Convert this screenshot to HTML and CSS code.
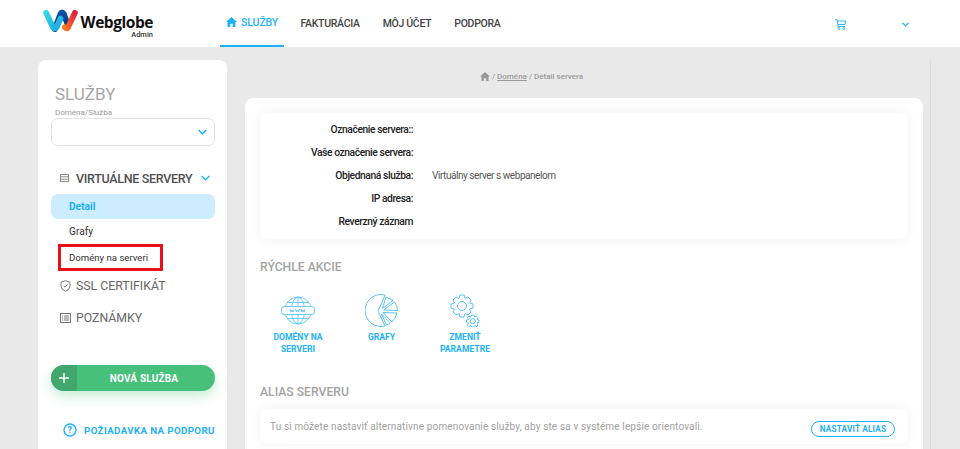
FILE: index.html
```html
<!DOCTYPE html>
<html lang="sk">
<head>
<meta charset="utf-8">
<title>Detail servera</title>
<link rel="stylesheet" href="styles.css">
</head>
<body>
<header class="topbar">
  <div class="logo">
    <svg class="logo-mark" width="35" height="23" viewBox="0 0 36 24">
      <defs>
        <linearGradient id="lg1" x1="0" y1="0" x2="1" y2="1"><stop offset="0" stop-color="#35d6e6"/><stop offset="1" stop-color="#1aa8e0"/></linearGradient>
        <linearGradient id="lg2" x1="0" y1="0" x2="0" y2="1"><stop offset="0" stop-color="#0a4fa8"/><stop offset="1" stop-color="#0f2f70"/></linearGradient>
        <linearGradient id="lg3" x1="1" y1="0" x2="0" y2="1"><stop offset="0" stop-color="#e3203a"/><stop offset="1" stop-color="#f7791f"/></linearGradient>
      </defs>
      <path d="M12 21 L18 5 Q19.500 2 21.500 5 L25 15" fill="none" stroke="url(#lg2)" stroke-width="6" stroke-linecap="round"/>
      <path d="M3 4 L10 19 Q12 22 14 19 L18 10" fill="none" stroke="url(#lg1)" stroke-width="6" stroke-linecap="round"/>
      <path d="M33 4 L26 19 Q24.500 21.500 22.500 19" fill="none" stroke="url(#lg3)" stroke-width="6" stroke-linecap="round"/>
    </svg>
    <div class="logo-text">
      <span class="logo-name">Webglobe</span>
      <span class="logo-sub">Admin</span>
    </div>
  </div>
  <nav class="nav">
    <a class="nav-item active">
      <svg width="11" height="10" viewBox="0 0 12 11"><path d="M6 0 L12 5.500 L10.300 5.500 L10.300 11 L7.400 11 L7.400 7.500 L4.600 7.500 L4.600 11 L1.700 11 L1.700 5.500 L0 5.500 Z" fill="#1eb1fb"/></svg>
      SLUŽBY
    </a>
    <a class="nav-item">FAKTURÁCIA</a>
    <a class="nav-item">MÔJ ÚČET</a>
    <a class="nav-item">PODPORA</a>
  </nav>
  <div class="top-actions">
    <svg width="11" height="11" viewBox="0 0 11 11" fill="none" stroke="#33b8fb" stroke-width="1"><path d="M0 .7 H2.200 L3 7.500 H10"/><path d="M2.400 2 H10.500 L10 5.500 H2.800"/><circle cx="3.800" cy="9.500" r="1"/><circle cx="8.800" cy="9.500" r="1"/></svg>
    <svg class="top-chevron" width="7" height="5" viewBox="0 0 7 5" fill="none" stroke="#33b8fb" stroke-width="1.300"><path d="M.5 .8 L3.500 3.800 L6.500 .8"/></svg>
  </div>
</header>

<div class="page">
  <aside class="sidebar">
    <h2 class="side-title">SLUŽBY</h2>
    <div class="field-label">Doména/Služba</div>
    <div class="select">
      <svg width="9" height="6" viewBox="0 0 9 6" fill="none" stroke="#1eb1fb" stroke-width="1.500"><path d="M.7 1 L4.500 4.700 L8.300 1"/></svg>
    </div>
    <div class="side-head">
      <svg width="9" height="8" viewBox="0 0 9 8" fill="none" stroke="#8a8a8a" stroke-width="1"><rect x=".5" y=".5" width="8" height="7"/><path d="M.5 2.800 H8.500 M.5 5.200 H8.500"/></svg>
      <span class="side-head-text">VIRTUÁLNE SERVERY</span>
      <svg width="9" height="6" viewBox="0 0 9 6" fill="none" stroke="#1eb1fb" stroke-width="1.500"><path d="M.7 1 L4.500 4.700 L8.300 1"/></svg>
    </div>
    <a class="sub-item current">Detail</a>
    <a class="sub-item">Grafy</a>
    <a class="sub-item marked">Domény na serveri</a>
    <div class="side-link">
      <svg width="11" height="12" viewBox="0 0 11 12" fill="none" stroke="#777" stroke-width="1"><path d="M5.500 .7 L10 2.300 V6 Q10 9.500 5.500 11.300 Q1 9.500 1 6 V2.300 Z"/><path d="M3.500 5.700 L5 7.200 L7.700 4.400"/></svg>
      SSL CERTIFIKÁT
    </div>
    <div class="side-link">
      <svg width="11" height="10" viewBox="0 0 11 10" fill="none" stroke="#777" stroke-width="1"><rect x=".5" y=".5" width="10" height="9"/><path d="M2 3 H3 M4 3 H9 M2 5 H3 M4 5 H9 M2 7 H3 M4 7 H9"/></svg>
      POZNÁMKY
    </div>
    <a class="new-service">
      <span class="new-plus">
        <svg width="10" height="10" viewBox="0 0 10 10" stroke="#fff" stroke-width="1.400"><path d="M5 0 V10 M0 5 H10"/></svg>
      </span>
      <span class="new-label">NOVÁ SLUŽBA</span>
    </a>
    <a class="support">
      <svg width="14" height="14" viewBox="0 0 14 14"><circle cx="7" cy="7" r="6" fill="none" stroke="#1eb1fb" stroke-width="1.400"/><text x="7" y="10.200" class="support-q">?</text></svg>
      POŽIADAVKA NA PODPORU
    </a>
  </aside>

  <main class="content">
    <div class="crumbs">
      <svg width="10" height="9" viewBox="0 0 12 11"><path d="M6 0 L12 5.500 L10.300 5.500 L10.300 11 L7.400 11 L7.400 7.500 L4.600 7.500 L4.600 11 L1.700 11 L1.700 5.500 L0 5.500 Z" fill="#9a9a9a"/></svg>
      <span>/ <u>Doména</u> / Detail servera</span>
    </div>
    <section class="panel">
      <div class="info">
        <div class="info-row"><b>Označenie servera::</b><span></span></div>
        <div class="info-row"><b>Vaše označenie servera:</b><span></span></div>
        <div class="info-row"><b>Objednaná služba:</b><span>Virtuálny server s webpanelom</span></div>
        <div class="info-row"><b>IP adresa:</b><span></span></div>
        <div class="info-row"><b>Reverzný záznam</b><span></span></div>
      </div>
      <h3 class="section-title">RÝCHLE AKCIE</h3>
      <div class="actions">
        <a class="action">
          <svg width="34" height="30" viewBox="0 0 34 30" fill="none" stroke="#45bffb" stroke-width=".8">
            <circle cx="17" cy="15" r="13.500"/>
            <ellipse cx="17" cy="15" rx="6.500" ry="13.500"/>
            <path d="M17 1.500 V28.500 M6 7 H28 M6 23 H28"/>
            <rect x=".5" y="11" width="33" height="8" rx="2.500" fill="#fff"/>
            <path d="M9 13.500 l1 3 l1 -2 l1 2 l1 -3 M14.500 13.500 l1 3 l1 -2 l1 2 l1 -3 M20 13.500 l1 3 l1 -2 l1 2 l1 -3"/>
          </svg>
          <span>DOMÉNY NA SERVERI</span>
        </a>
        <a class="action">
          <svg width="33" height="33" viewBox="0 0 33 33" fill="none" stroke="#45bffb" stroke-width=".9">
            <path d="M20 1 A16 16 0 1 0 20 32 L13 17 Z"/>
            <path d="M21 3 L28 6.500 L17.500 14.500 Z"/>
            <path d="M29.500 8 Q32.500 12 32.500 16.500 L18.500 16 Z"/>
            <path d="M32 19 Q31 24 27 28 L18 18.500 Z"/>
            <path d="M25.500 29 Q23.500 30.500 21.500 31 L16.500 20 Z"/>
          </svg>
          <span>GRAFY</span>
        </a>
        <a class="action">
          <svg width="30" height="33" viewBox="0 0 30 33" fill="none" stroke="#45bffb" stroke-width=".9">
            <path d="M10 1 H14 L15 4.500 L18 3 L21 6 L19.500 9 L23 10 V14 L19.500 15 L21 18 L18 21 L15 19.500 L14 23 H10 L9 19.500 L6 21 L3 18 L4.500 15 L1 14 V10 L4.500 9 L3 6 L6 3 L9 4.500 Z"/>
            <circle cx="12" cy="12" r="4.500"/>
            <path d="M21.500 21 H24 L24.700 23 L26.500 22 L28 23.500 L27 25.500 L29 26 V28.500 L27 29 L28 31 L26.500 32.500 L24.700 31.500 L24 33 H21.500 L20.800 31.500 L19 32.500 L17.500 31 L18.500 29 L16.500 28.500 V26 L18.500 25.500 L17.500 23.500 L19 22 L20.800 23 Z"/>
            <circle cx="22.800" cy="27.200" r="2.500"/>
          </svg>
          <span>ZMENIŤ PARAMETRE</span>
        </a>
      </div>
      <h3 class="section-title alias-title">ALIAS SERVERU</h3>
      <div class="alias">
        <p>Tu si môžete nastaviť alternatívne pomenovanie služby, aby ste sa v systéme lepšie orientovali.</p>
        <a class="alias-btn">NASTAVIŤ ALIAS</a>
      </div>
    </section>
  </main>
  <div class="rail"></div>
</div>
</body>
</html>
```

FILE: styles.css
```css
* { box-sizing: border-box; }
html, body { margin: 0; height: 449px; overflow: hidden; }
body { background: #e9e9e9; font-family: Roboto, "Liberation Sans", sans-serif; color: #333; }
a { display: block; }

.topbar { height: 47px; background: #fff; display: flex; align-items: stretch; padding-left: 43px; }
.logo { width: 177px; display: flex; align-items: flex-start; padding-top: 9px; }
.logo-mark { flex: none; }
.logo-text { display: flex; flex-direction: column; align-items: flex-end; margin-left: 4px; width: 71px; }
.logo-name { font-family: "Open Sans", sans-serif; font-weight: 700; font-size: 15.500px; line-height: 15px; letter-spacing: -.45px; margin-top: 6px; color: #111; }
.logo-sub { font-size: 7.500px; font-weight: 500; line-height: 8px; margin-top: 1px; color: #333; }

.nav { display: flex; }
.nav-item { display: flex; align-items: center; gap: 5px; height: 47px; padding: 0 11.500px 1px; font-size: 10.500px; font-weight: 500; letter-spacing: -.3px; color: #444; }
.nav-item.active { width: 64px; gap: 4px; padding: 0 0 1px 6px; color: #1eb1fb; border-bottom: 2px solid #1eb1fb; margin-right: 5px; white-space: nowrap; letter-spacing: -.1px; }

.top-actions { margin-left: 323px; display: flex; align-items: center; padding-top: 1px; }
.top-chevron { margin-left: 56px; }

.page { display: flex; align-items: flex-start; padding: 13px 0 0 38px; }

.sidebar { flex: none; width: 189px; height: 400px; background: #fff; border-radius: 8px; padding: 25px 12px 0 13px; }
.side-title { margin: 0; padding-left: 4px; font-size: 17px; font-weight: 400; line-height: 18px; color: #a6a6a6; }
.field-label { padding-left: 4px; margin-top: 4px; font-size: 8px; line-height: 11px; color: #999; }
.select { height: 28px; padding-right: 7px; border: 1px solid #e2e2e2; border-radius: 7px; display: flex; align-items: center; justify-content: flex-end; box-shadow: 0 1px 2px rgba(0,0,0,.03); }
.side-head { display: flex; align-items: center; height: 20px; margin-top: 22px; padding-left: 9px; }
.side-head-text { margin: 0 9px 0 7px; font-size: 12.500px; font-weight: 500; letter-spacing: -.3px; color: #505050; white-space: nowrap; }
.sub-item { height: 25px; padding-left: 18px; font-size: 10.200px; line-height: 26px; color: #333; }
.sub-item.current { margin-top: 6px; background: #ccedff; border-radius: 7px; color: #1eb1fb; font-weight: 700; line-height: 25px; }
.sub-item.marked { outline: 3px solid #e8101f; outline-offset: -3px; margin: 0 0 -1px 7px; padding-left: 11px; width: 105px; height: 27px; line-height: 27px; font-size: 9.600px; white-space: nowrap; }
.side-link { display: flex; align-items: center; gap: 5px; height: 32px; padding-left: 9px; font-size: 12.300px; color: #666; }
.side-link svg { flex: none; }
.new-service { display: flex; height: 26px; margin-top: 31px; border-radius: 13px; overflow: hidden; background: #47c07c; box-shadow: 0 5px 12px rgba(71,192,124,.3); }
.new-plus { width: 26px; background: #41a76e; display: flex; align-items: center; justify-content: center; }
.new-label { flex: 1; padding-right: 4px; text-align: center; color: #fff; font-size: 10px; font-weight: 700; line-height: 28px; letter-spacing: .2px; }
.support { display: flex; align-items: center; gap: 7px; margin-top: 32px; padding-left: 12px; color: #1eb1fb; font-size: 9.700px; font-weight: 700; letter-spacing: .4px; white-space: nowrap; }
.support svg { flex: none; }
.support-q { font-size: 9px; font-weight: 700; fill: #1eb1fb; text-anchor: middle; }

.content { flex: none; width: 678px; margin-left: 18px; }
.crumbs { height: 25px; display: flex; align-items: flex-start; gap: 2px; margin-top: 12px; padding-left: 235px; font-size: 8px; font-weight: 500; line-height: 10px; color: #9b9b9b; }
.crumbs svg { flex: none; }

.panel { background: #fff; border-radius: 8px; height: 370px; margin-top: 1px; padding: 15px; }
.info { height: 126px; border-radius: 8px; padding-top: 9px; box-shadow: 0 0 14px rgba(0,0,0,.05); }
.info-row { display: grid; grid-template-columns: 153px 1fr; column-gap: 19px; height: 22.900px; line-height: 15px; font-size: 10px; letter-spacing: -.45px; color: #555; }
.info-row b { text-align: right; font-size: 10.300px; letter-spacing: -.42px; font-weight: 500; color: #222; white-space: nowrap; }

.section-title { margin: 20px 0 0; font-size: 12.200px; line-height: 16px; font-weight: 500; color: #a3a3a3; }
.alias-title { margin-top: 0; }
.actions { display: flex; height: 109px; padding-top: 19px; }
.action { display: flex; flex-direction: column; align-items: center; text-align: center; color: #1eb1fb; font-size: 8.600px; font-weight: 700; line-height: 12px; }
.action svg { display: block; height: 33px; flex: none; margin-bottom: 4px; }
.action:nth-child(1) { width: 76px; }
.action:nth-child(2) { width: 91px; }
.action:nth-child(3) { width: 76px; }
.action span { width: 60px; }

.alias { margin-top: 9px; height: 35px; border-radius: 8px; box-shadow: 0 0 14px rgba(0,0,0,.05); display: flex; align-items: center; padding: 0 13px 0 10px; justify-content: space-between; }
.alias p { margin: 0; font-size: 10px; letter-spacing: .14px; color: #a0a0a0; white-space: nowrap; }
.alias-btn { height: 16px; width: 84px; margin-top: 5px; border: 1px solid #1eb1fb; border-radius: 8px; font-size: 8.200px; font-weight: 700; line-height: 14px; text-align: center; color: #1eb1fb; letter-spacing: .2px; white-space: nowrap; }

.rail { flex: none; width: 1px; height: 389px; margin-left: 7px; background: #dcdcdc; }
```
